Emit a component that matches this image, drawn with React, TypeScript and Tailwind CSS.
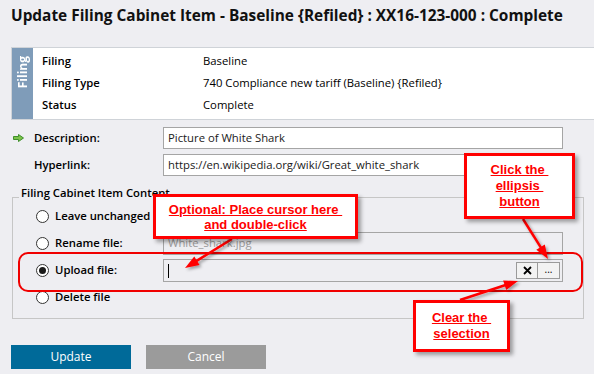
const arrows = [
  { x1: 232, y1: 239, x2: 185, y2: 268 },
  { x1: 523, y1: 219, x2: 548, y2: 259 },
  { x1: 460, y1: 300, x2: 518, y2: 281 },
];

function headPoints(a: { x1: number; y1: number; x2: number; y2: number }) {
  const dx = a.x2 - a.x1;
  const dy = a.y2 - a.y1;
  const len = Math.hypot(dx, dy);
  const ux = dx / len;
  const uy = dy / len;
  const L = 14;
  const W = 5;
  const bx = a.x2 - ux * L;
  const by = a.y2 - uy * L;
  return {
    points: `${a.x2},${a.y2} ${bx - uy * W},${by + ux * W} ${bx + uy * W},${by - ux * W}`,
    ex: a.x2 - ux * L * 0.7,
    ey: a.y2 - uy * L * 0.7,
  };
}

function Radio({ checked }: { checked?: boolean }) {
  return (
    <span className="w-[13px] h-[13px] rounded-full border border-[#333] bg-white flex items-center justify-center shrink-0">
      {checked && <span className="w-[7px] h-[7px] rounded-full bg-[#1a1a1a]" />}
    </span>
  );
}

function InfoRow({ label, value }: { label: string; value: string }) {
  return (
    <div className="flex items-center h-[22px]">
      <span className="w-[170px] pl-[9px] font-semibold">{label}</span>
      <span>{value}</span>
    </div>
  );
}

export default function App() {
  return (
    <div
      className="relative w-[594px] h-[374px] overflow-hidden bg-[#eeeef2] text-[11.3px] text-black"
      style={{ fontFamily: '"Open Sans", "Noto Sans", sans-serif' }}
    >
      <h1 className="pt-[5px] pl-[11px] text-[15.4px] leading-[22px] font-bold text-[#111] whitespace-nowrap">
        Update Filing Cabinet Item - Baseline {"{Refiled}"} : XX16-123-000 : Complete
      </h1>

      {/* filing summary panel */}
      <div className="mt-[20px] ml-[11px] w-[600px] flex border border-[#cfd3d8] bg-white">
        <div className="w-[21px] bg-[#7f9cb9] flex flex-col items-center pt-[8px]">
          <span className="[writing-mode:vertical-rl] rotate-180 text-white font-bold text-[12px] leading-[21px]">
            Filing
          </span>
        </div>
        <div className="pt-[2px] pb-[3px]">
          <InfoRow label="Filing" value="Baseline" />
          <InfoRow label="Filing Type" value="740 Compliance new tariff (Baseline) {Refiled}" />
          <InfoRow label="Status" value="Complete" />
        </div>
      </div>

      {/* description / hyperlink */}
      <div className="mt-[7px] flex items-center h-[22px]">
        <span className="w-[34px] pl-[13px] flex items-center">
          <svg width="11" height="8" viewBox="0 0 11 8">
            <polygon
              points="0.5,2.5 5.5,2.5 5.5,0.5 10.5,4 5.5,7.5 5.5,5.5 0.5,5.5"
              fill="#7cc24a"
              stroke="#3f8f2b"
              strokeWidth="1"
            />
          </svg>
        </span>
        <span className="w-[129px] font-semibold">Description:</span>
        <div className="w-[400px] h-[22px] border border-[#a5a5a5] bg-white flex items-center px-[4px] text-[#1a1a1a]">
          Picture of White Shark
        </div>
      </div>
      <div className="mt-[5px] flex items-center h-[22px]">
        <span className="w-[163px] pl-[34px] font-semibold">Hyperlink:</span>
        <div className="w-[400px] h-[22px] border border-[#a5a5a5] bg-white flex items-center px-[4px] text-[#1a1a1a]">
          https://en.wikipedia.org/wiki/Great_white_shark
        </div>
      </div>

      {/* content group */}
      <fieldset className="mt-[9px] ml-[12px] w-[572px] border border-[#c6c6c6] pb-[9px]">
        <legend className="ml-[6px] px-[2px] leading-[16px] pb-[8px] font-semibold">
          Filing Cabinet Item Content
        </legend>
        <div className="-mt-[4px] flex flex-col gap-[4px]">
          <div className="h-[23px] flex items-center pl-[23px] gap-[6px]">
            <Radio />
            <span className="font-semibold">Leave unchanged</span>
          </div>
          <div className="h-[23px] flex items-center pl-[23px]">
            <Radio />
            <span className="ml-[6px] w-[108px] font-semibold">Rename file:</span>
            <div className="w-[400px] h-[23px] border border-[#a5a5a5] bg-[#eeeef2] flex items-center px-[4px] text-[#9a9a9a]">
              White_shark.jpg
            </div>
          </div>
          <div className="h-[23px] flex items-center pl-[23px]">
            <Radio checked />
            <span className="ml-[6px] w-[108px] font-semibold">Upload file:</span>
            <div className="w-[400px] h-[23px] border border-[#a5a5a5] bg-[#eeeef2] flex items-center pl-[4px] pr-[2px]">
              <span className="w-px h-[14px] bg-black" />
              <div className="ml-auto flex">
                <button className="w-[22px] h-[17px] border border-[#9a9a9a] bg-[#f2f2f2] flex items-center justify-center">
                  <svg width="9" height="9" viewBox="0 0 9 9">
                    <path d="M1 1 L8 8 M8 1 L1 8" stroke="#000" strokeWidth="1.8" />
                  </svg>
                </button>
                <button className="w-[22px] h-[17px] border border-l-0 border-[#9a9a9a] bg-[#f2f2f2] flex items-center justify-center text-[10px] leading-none pb-[3px]">
                  ...
                </button>
              </div>
            </div>
          </div>
          <div className="h-[23px] flex items-center pl-[23px] gap-[6px]">
            <Radio />
            <span className="font-semibold">Delete file</span>
          </div>
        </div>
      </fieldset>

      {/* actions */}
      <div className="mt-[26px] ml-[11px] flex gap-[15px]">
        <button className="w-[120px] h-[24px] bg-[#006a99] text-white text-[12px]">Update</button>
        <button className="w-[120px] h-[24px] bg-[#9b9b9b] text-white text-[12px]">Cancel</button>
      </div>

      {/* annotations */}
      <div className="absolute left-[18px] top-[252px] w-[565px] h-[40px] rounded-[10px] border-2 border-[#f00000]" />

      <svg className="absolute left-0 top-0 pointer-events-none" width="594" height="374">
        <defs>
          <filter id="sh" x="-20%" y="-20%" width="140%" height="140%">
            <feDropShadow dx="2" dy="2" stdDeviation="1.5" floodColor="#000" floodOpacity="0.35" />
          </filter>
        </defs>
        {arrows.map((a, i) => {
          const h = headPoints(a);
          return (
            <g key={i} filter="url(#sh)">
              <line x1={a.x1} y1={a.y1} x2={h.ex} y2={h.ey} stroke="#ff0000" strokeWidth="2.5" />
              <polygon points={h.points} fill="#ff0000" />
            </g>
          );
        })}
      </svg>

      <div
        className="absolute left-[153px] top-[194px] w-[205px] h-[45px] border-[3px] border-[#ff0000] bg-white shadow-[3px_3px_4px_rgba(0,0,0,0.35)] flex flex-col items-center justify-center text-[13px] leading-[15px] font-bold text-[#ff0000] underline"
        style={{ fontFamily: '"Liberation Sans", Arial, sans-serif' }}
      >
        <span className="whitespace-pre">{"Optional: Place cursor here "}</span>
        <span>and double-click</span>
      </div>

      <div
        className="absolute left-[464px] top-[153px] w-[111px] h-[66px] border-[3px] border-[#ff0000] bg-white shadow-[3px_3px_4px_rgba(0,0,0,0.35)] flex flex-col items-center justify-center text-[13px] leading-[16px] font-bold text-[#ff0000] underline"
        style={{ fontFamily: '"Liberation Sans", Arial, sans-serif' }}
      >
        <span className="whitespace-pre">{"Click the "}</span>
        <span className="whitespace-pre">{"ellipsis "}</span>
        <span>button</span>
      </div>

      <div
        className="absolute left-[413px] top-[300px] w-[97px] h-[52px] border-[3px] border-[#ff0000] bg-white shadow-[3px_3px_4px_rgba(0,0,0,0.35)] flex flex-col items-center justify-center text-[13px] leading-[16px] font-bold text-[#ff0000] underline"
        style={{ fontFamily: '"Liberation Sans", Arial, sans-serif' }}
      >
        <span className="whitespace-pre">{"Clear the "}</span>
        <span>selection</span>
      </div>
    </div>
  );
}
